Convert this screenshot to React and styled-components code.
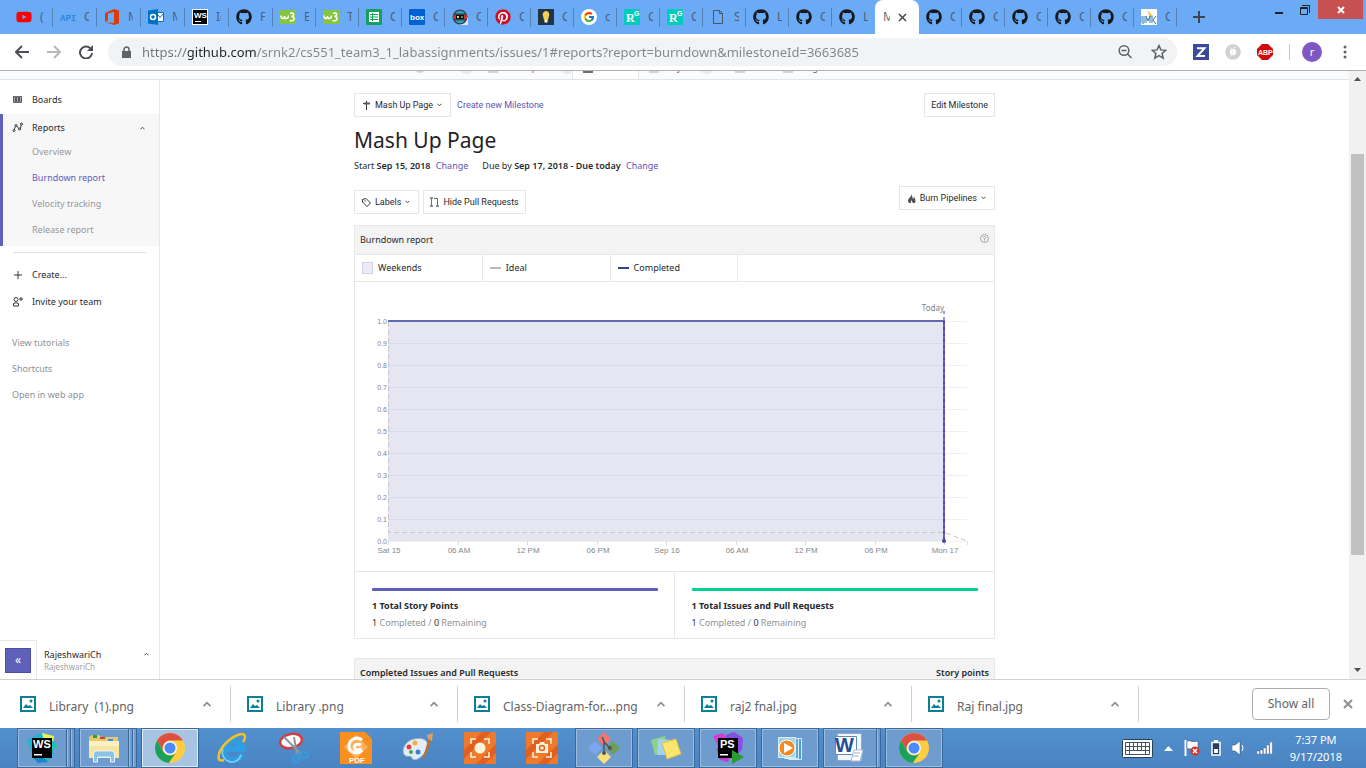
import React from "react";
import styled, { createGlobalStyle, css } from "styled-components";
import { FaGithub, FaPinterest, FaYoutube } from "react-icons/fa";
import { FcGoogle } from "react-icons/fc";

const ui = `"Noto Sans", "Open Sans", sans-serif`;
const compact = `Roboto, "Noto Sans", sans-serif`;
const arial = `"Liberation Sans", Arial, sans-serif`;
const line = "#e8e8e8";
const purple = "#5e60ba";

const Global = createGlobalStyle`
  *, *::before, *::after { box-sizing: border-box; }
  body { margin: 0; background: #fff; font-family: ${ui}; color: #26292c; }
  button { font-family: inherit; color: inherit; background: none; border: 0; padding: 0; margin: 0; cursor: pointer; }
  svg { display: block; flex: none; }
  ul, h1, h2, h3, p { margin: 0; padding: 0; font-weight: 400; }
  ul { list-style: none; }
`;

const Screen = styled.div`
  height: 100vh;
  display: flex;
  flex-direction: column;
  overflow: hidden;
`;

/* ---------- browser tabs ---------- */
const TabStrip = styled.div`
  display: flex;
  height: 34px;
  flex: none;
  background: #6babf6;
  padding-left: 9px;
`;
const Tab = styled.button`
  display: flex;
  align-items: center;
  gap: 8px;
  height: 34px;
  width: ${(p) => (p.$wide ? 44 : 43)}px;
  flex: none;
  padding-left: 7px;
  position: relative;
  &::after {
    content: "";
    position: absolute;
    right: 0;
    top: 8px;
    height: 19px;
    width: 1px;
    background: ${(p) => (p.$line ? "#5681b4" : "transparent")};
  }
`;
const TabText = styled.span`
  width: 5px;
  overflow: hidden;
  font-size: 12px;
  line-height: 18px;
  white-space: nowrap;
  text-align: left;
  color: #4d6079;
`;
const ActiveTab = styled.button`
  display: flex;
  align-items: center;
  gap: 8px;
  width: 44px;
  height: 34px;
  flex: none;
  padding-left: 8px;
  background: #fff;
  border-radius: 8px 8px 0 0;
`;
const ActiveText = styled(TabText)`
  width: 7px;
  color: #6f6f6f;
`;
const NewTab = styled.button`
  display: grid;
  place-items: center;
  width: 44px;
  height: 34px;
`;
const WindowButtons = styled.div`
  display: flex;
  align-items: flex-start;
  margin-left: auto;
  padding-right: 3px;
`;
const WinButton = styled.button`
  display: grid;
  place-items: center;
  width: ${(p) => (p.$close ? 45 : 26)}px;
  height: 19px;
  background: ${(p) => (p.$close ? "#c75050" : "transparent")};
`;

/* ---------- toolbar ---------- */
const Toolbar = styled.div`
  display: flex;
  align-items: center;
  height: 37px;
  flex: none;
  padding: 0 14px 0 12px;
  border-bottom: 1px solid #b5aeb2;
  background: #fff;
`;
const ToolButton = styled.button`
  display: grid;
  place-items: center;
  width: 20px;
  height: 28px;
  margin-right: 12px;
`;
const Omnibox = styled.div`
  display: flex;
  align-items: center;
  flex: 1;
  min-width: 0;
  height: 28px;
  padding: 0 10px 0 14px;
  border-radius: 14px;
  background: #f1f3f4;
`;
const Url = styled.input`
  flex: 1;
  min-width: 0;
  border: 0;
  outline: 0;
  padding: 0;
  margin-left: 11px;
  font: 13px/20px ${ui};
  color: transparent;
  background: linear-gradient(90deg, #72767a 46px, #1f2225 46px, #1f2225 115px, #80868b 115px);
  -webkit-background-clip: text;
  background-clip: text;
`;
const BoxButton = styled.button`
  margin-left: 18px;
`;
const Extensions = styled.div`
  display: flex;
  align-items: center;
  gap: 16px;
  padding-left: 16px;
`;
const Rule = styled.span`
  width: 1px;
  height: 16px;
  background: #c6c8ca;
`;
const Avatar = styled.button`
  width: 20px;
  height: 20px;
  margin-left: -4px;
  border-radius: 50%;
  background: #7e57c2;
  color: #fff;
  font-size: 11px;
  line-height: 18px;
`;

/* ---------- page ---------- */
const Viewport = styled.div`
  display: flex;
  flex: 1;
  min-height: 0;
`;
const Page = styled.div`
  flex: 1;
  min-width: 0;
  display: flex;
  flex-direction: column;
  overflow: hidden;
`;
const RepoNav = styled.nav`
  display: flex;
  justify-content: center;
  height: 9px;
  flex: none;
  overflow: hidden;
  background: #fafbfc;
  border-bottom: 1px solid #e1e4e8;
`;
const RepoNavInner = styled.div`
  display: flex;
  width: 641px;
  height: 9px;
  padding-left: 51px;
`;
const RepoLink = styled.a`
  display: flex;
  align-items: flex-end;
  gap: 4px;
  width: ${(p) => p.$w}px;
  height: 9px;
  padding: 0 10px 5px;
  flex: none;
  font-size: 9px;
  line-height: 12px;
  white-space: nowrap;
  text-decoration: none;
  color: #586069;
  & > span:nth-child(2) { padding-bottom: 1px; }
  ${(p) =>
    p.$on &&
    css`
      background: #fff;
      border: solid #e1e4e8;
      border-width: 0 1px;
      color: #24292e;
    `}
`;
const NavGlyph = styled.span`
  width: 10px;
  height: 10px;
  flex: none;
  margin-bottom: 2px;
  border-radius: ${(p) => (p.$round ? 5 : 0)}px;
  background: ${(p) => (p.$on ? "#6b7075" : "#d3d6d9")};
`;
const NavCount = styled.i`
  width: 12px;
  height: 10px;
  flex: none;
  margin-bottom: 1px;
  border-radius: 5px;
  background: #e9ebed;
`;
const Body = styled.div`
  display: flex;
  flex: 1;
  min-height: 0;
`;
const Sidebar = styled.aside`
  display: flex;
  flex-direction: column;
  width: 160px;
  flex: none;
  border-right: 1px solid ${line};
  padding-top: 6px;
`;
const SideItem = styled.a`
  display: flex;
  align-items: center;
  gap: 9px;
  height: 27px;
  padding: 0 14px 0 ${(p) => (p.$inset ? 9 : 12)}px;
  font-size: 9px;
  line-height: 12px;
  text-decoration: none;
  color: #26292c;
  & > svg:last-child:not(:first-child) { margin-left: auto; }
`;
const SideGroup = styled.div`
  border-left: 3px solid ${purple};
  background: #f7f7f7;
  margin-top: 1px;
  padding-bottom: 3px;
`;
const SideSub = styled.a`
  display: block;
  padding-left: 29px;
  font-size: 9px;
  line-height: 26px;
  height: 26px;
  text-decoration: none;
  color: ${(p) => (p.$on ? purple : "#96989b")};
`;
const SubList = styled.div`
  margin-top: -2px;
`;
const SideRule = styled.hr`
  width: 133px;
  height: 1px;
  margin: 6px 0 8px 13px;
  border: 0;
  background: #dfdfdf;
`;
const SideLinks = styled.div`
  margin-top: 15px;
`;
const SideLink = styled.a`
  display: block;
  padding-left: 12px;
  font-size: 9px;
  line-height: 26px;
  text-decoration: none;
  color: #8f9194;
`;
const UserBar = styled.div`
  display: flex;
  align-items: center;
  height: 39px;
  margin-top: auto;
`;
const CollapseCell = styled.div`
  width: 37px;
  height: 39px;
  padding: 6px 5px;
  border: solid ${line};
  border-width: 1px 1px 0 0;
`;
const Collapse = styled.button`
  width: 26px;
  height: 25px;
  border: 1px solid #4c4ea3;
  background: ${purple};
  color: #fff;
  font-size: 12px;
  line-height: 20px;
`;
const UserText = styled.div`
  flex: 1;
  padding: 2px 0 0 7px;
  font-size: 9px;
  line-height: 13px;
`;
const UserSub = styled.div`
  font-size: 8px;
  line-height: 12px;
  color: #9fa1a3;
`;
const UserToggle = styled.button`
  align-self: flex-start;
  margin: 12px 10px 0 0;
`;

const Main = styled.main`
  flex: 1;
  min-width: 0;
  padding: 13px 160px 0 0;
  overflow: hidden;
`;
const Column = styled.div`
  max-width: 641px;
  margin: 0 auto;
`;
const Bar = styled.div`
  display: flex;
  align-items: ${(p) => (p.$top ? "flex-start" : "center")};
  gap: 4px;
`;
const Outline = styled.button`
  display: flex;
  align-items: center;
  gap: 4px;
  height: 24px;
  padding: 0 ${(p) => (p.$plain ? 6 : 8)}px 0 ${(p) => (p.$plain ? 6 : 7)}px;
  border: 1px solid #e6e6e6;
  background: #fff;
  font: 9px/12px ${compact};
  white-space: nowrap;
  margin-left: ${(p) => (p.$end ? "auto" : 0)};
`;
const TextLink = styled.a`
  color: #5c54b4;
  font-size: 9px;
  line-height: 12px;
  text-decoration: none;
`;
const LeadLink = styled(TextLink)`
  padding-left: 2px;
  font-family: ${compact};
`;
const Title = styled.h1`
  margin-top: 7px;
  font-size: 21px;
  line-height: 32px;
  color: #1f2326;
`;
const Dates = styled.p`
  display: flex;
  gap: 14px;
  margin-top: 4px;
  font-size: 9px;
  line-height: 12px;
  b { font-weight: 600; }
  a { margin-left: 3px; }
`;
const Filters = styled(Bar)`
  margin: 14px 0 11px;
`;
const FilterSet = styled.div`
  display: flex;
  gap: 4px;
  padding-top: 4px;
`;
const Panel = styled.section`
  border: 1px solid ${line};
  background: #fff;
`;
const PanelHead = styled.header`
  display: flex;
  align-items: center;
  justify-content: space-between;
  height: 29px;
  padding: 0 5px;
  border-bottom: 1px solid ${line};
  background: #f3f3f3;
  font-size: 9px;
  line-height: 12px;
`;
const HeadTitle = styled.h2`
  font-size: 9px;
  line-height: 12px;
  font-weight: ${(p) => (p.$bold ? 600 : 400)};
`;
const HelpButton = styled.button`
  margin-bottom: 3px;
`;
const Legend = styled.div`
  display: grid;
  grid-template-columns: repeat(5, 1fr);
  height: 27px;
  border-bottom: 1px solid ${line};
`;
const LegendItem = styled.div`
  display: flex;
  align-items: center;
  gap: 5px;
  padding-left: 7px;
  border-right: 1px solid ${line};
  font-size: 9px;
  line-height: 12px;
`;
const Swatch = styled.span`
  width: 11px;
  height: 12px;
  border: 1px solid #d3d5e6;
  background: #e9ebf7;
`;
const Dash = styled.span`
  width: 11px;
  height: 2px;
  background: ${(p) => p.$c};
`;
const Chart = styled.svg`
  width: 100%;
  height: auto;
  font-family: ${arial};
`;
const Stats = styled.div`
  display: grid;
  grid-template-columns: 1fr 1fr;
  border-top: 1px solid ${line};
`;
const Stat = styled.div`
  padding: 16px 16px 9px 17px;
  &:first-child { border-right: 1px solid ${line}; }
`;
const Meter = styled.div`
  height: 3px;
  border-radius: 1px;
  background: ${(p) => p.$c};
`;
const StatTitle = styled.h3`
  margin-top: 8px;
  font-size: 9px;
  line-height: 14px;
  font-weight: 700;
`;
const StatText = styled.p`
  margin-top: 4px;
  font-size: 9px;
  line-height: 12px;
  color: #8f9194;
  span { color: #33363a; }
`;
const NextPanel = styled(Panel)`
  margin-top: 19px;
`;

const ScrollBar = styled.div`
  display: flex;
  flex-direction: column;
  align-items: center;
  width: 17px;
  flex: none;
  padding: 6px 2px;
  background: #f1f1f1;
`;
const ScrollTrack = styled.div`
  flex: 1;
  align-self: stretch;
  padding-top: 72px;
`;
const Thumb = styled.div`
  height: 78%;
  background: #c1c1c1;
`;

/* ---------- downloads ---------- */
const Shelf = styled.footer`
  display: flex;
  align-items: center;
  height: 49px;
  flex: none;
  border-top: 1px solid #d0d0d0;
  background: #fff;
`;
const Download = styled.button`
  display: flex;
  align-items: center;
  width: ${(p) => (p.$first ? 231 : 227)}px;
  height: 36px;
  flex: none;
  padding: 0 18px 0 ${(p) => (p.$first ? 20 : 16)}px;
  border-right: 1px solid #d0d0d0;
  color: #5f6368;
`;
const FileName = styled.span`
  flex: 1;
  padding: 5px 0 0 13px;
  text-align: left;
  font-size: 12px;
  line-height: 18px;
  white-space: pre;
`;
const ShowAll = styled.button`
  width: 78px;
  height: 32px;
  margin-left: auto;
  border: 1px solid #a9acb0;
  border-radius: 4px;
  font-size: 12px;
  line-height: 28px;
  color: #5f6368;
`;
const CloseShelf = styled.button`
  margin: 0 13px 0 13px;
`;

/* ---------- taskbar ---------- */
const Taskbar = styled.div`
  display: flex;
  align-items: center;
  height: 40px;
  flex: none;
  padding: 0 24px 0 17px;
  background: linear-gradient(#5390cd, #4a83c2);
`;
const Apps = styled.div`
  display: flex;
  gap: 4px;
`;
const App_ = styled.button`
  display: grid;
  place-items: center;
  width: 58px;
  height: 40px;
  position: relative;
  ${(p) =>
    p.$open &&
    css`
      border: 1px solid #3d6796;
      background: #6f9ccf;
      box-shadow: inset 0 0 0 1px #9cbde0;
    `}
  ${(p) =>
    p.$active &&
    css`
      background: #a8c4e3;
      box-shadow: inset 0 0 0 1px #dfeaf6;
    `}
  ${(p) =>
    p.$stack &&
    css`
      padding-right: ${p.$stack * 4}px;
      &::before {
        content: "";
        position: absolute;
        inset: 0 0 0 auto;
        width: ${p.$stack * 4}px;
        background: repeating-linear-gradient(90deg, #3d6796 0 1px, #9cbde0 1px 2px, #6f9ccf 2px 4px);
      }
    `}
`;
const Tray = styled.div`
  display: flex;
  align-items: center;
  gap: 11px;
  margin-left: auto;
`;
const Clock = styled.div`
  padding-left: 6px;
  text-align: center;
  font-size: 11px;
  line-height: 17px;
  color: #fff;
`;

/* ---------- icons ---------- */
const Svg = ({ w = 16, h, box, children, ...r }) => (
  <svg width={w} height={h || w} viewBox={box || `0 0 ${w} ${h || w}`} fill="none" aria-hidden="true" {...r}>
    {children}
  </svg>
);
const Chevron = ({ up, w = 5, c = "#45484c", s = 1 }) => (
  <Svg w={w} h={Math.ceil(w / 2) + 1} box="0 0 10 7">
    <path d={up ? "M1 6l4-4 4 4" : "M1 1l4 4 4-4"} stroke={c} strokeWidth={(s * 10) / w} />
  </Svg>
);
const Gh = () => <FaGithub size={16} color="#15191d" />;
const W3 = () => (
  <Svg>
    <path fill="#86c440" d="M0 1h16v14H0z" />
    <path d="M1 6.500c0 4 3.500 4 3.500.500 0 3.500 4 3.500 4-.500" stroke="#fff" strokeWidth="1.500" />
    <path d="M10 4.500c4-2 5 2.500 1.500 3 4 0 3.500 5.500-2 4" stroke="#fff" strokeWidth="1.500" />
  </Svg>
);
const Rg = () => (
  <Svg>
    <rect width="16" height="16" rx="1" fill="#00ccbb" />
    <text x="2" y="13" fontSize="12" fontFamily="Liberation Serif, serif" fontWeight="700" fill="#fff">R</text>
    <text x="10" y="7" fontSize="7" fontFamily="Liberation Sans, sans-serif" fontWeight="700" fill="#fff">G</text>
  </Svg>
);
const WsMark = () => (
  <Svg>
    <rect width="16" height="16" fill="#fff" />
    <rect x="1" y="1" width="14" height="14" fill="#000" />
    <text x="2" y="9" fontSize="8" fontFamily="Liberation Sans, sans-serif" fontWeight="700" fill="#fff">WS</text>
    <path fill="#fff" d="M3 12h6v1H3z" />
  </Svg>
);
const tabs = [
  ["(", <FaYoutube size={16} color="#f00" />],
  ["C", (
    <Svg><text x="0" y="12" fontSize="9" fontFamily="Liberation Mono, monospace" fontWeight="700" fill="#2c86dc">API</text></Svg>
  )],
  ["M", (
    <Svg><path fill="#dc3e0b" d="M1 4l9-4 5 1.500v13L10 16 1 13l9 1V3L4 4.500v7L1 13z" /></Svg>
  )],
  ["M", (
    <Svg>
      <path fill="#fff" stroke="#0072c6" d="M9 3.500h6.500v9H9z" /><path d="M10 6l2 2.500L15 5" stroke="#0072c6" />
      <path fill="#0072c6" d="M0 1.500L10 0v16L0 14.500z" /><circle cx="5" cy="8" r="2.500" stroke="#fff" strokeWidth="1.500" />
    </Svg>
  )],
  ["Ic", <WsMark />],
  ["F", <Gh />],
  ["E", <W3 />],
  ["T", <W3 />],
  ["C", (
    <Svg><rect width="16" height="16" rx="1" fill="#16a05d" /><path fill="#fff" d="M3 3h10v10H3z" /><path stroke="#16a05d" d="M4 5.500h8M4 8h8M4 10.500h8M6.500 4v8" /></Svg>
  )],
  ["C", (
    <Svg><rect width="16" height="16" rx="1" fill="#0061d5" /><text x="1" y="11" fontSize="8" fontFamily="Liberation Sans, sans-serif" fontWeight="700" fill="#fff">box</text></Svg>
  )],
  ["C", (
    <Svg><path fill="#dfe6ea" d="M8 8h8v8H8z" /><circle cx="8" cy="8" r="7.500" fill="#35434d" /><path fill="#32a3c4" d="M3 4.500a6 6 0 0110 0zM3 11.500a6 6 0 0010 0z" /><path fill="#c8332d" d="M1 6h3v4H1zM12 6h3v4h-3z" /><path fill="#111" d="M4 6h8v4H4z" /><path fill="#e4d24a" d="M5 7h2v2H5z" /><path fill="#3c9f5a" d="M9 7h2v2H9z" /></Svg>
  )],
  ["C", (
    <Svg><circle cx="8" cy="8" r="7.500" fill="#fff" /><FaPinterest size={16} color="#c8102b" /></Svg>
  )],
  ["C", (
    <Svg><path fill="#243340" d="M0 0h16v16H0z" /><path fill="#f7cf52" d="M8 2a3.500 3.500 0 00-3 5l1 4h4l1-4a3.500 3.500 0 00-3-5z" /><path fill="#fff" d="M6.500 11h3v2.500h-3z" /></Svg>
  )],
  ["c", (
    <Svg><circle cx="8" cy="8" r="8" fill="#fff" /><g transform="translate(2 2)"><FcGoogle size={12} /></g></Svg>
  )],
  ["C", <Rg />],
  ["C", <Rg />],
  ["S", (
    <Svg><path d="M3.500 1.500h6l3 3v10h-9zM9.500 1.500v3h3" stroke="#4b5560" /></Svg>
  )],
  ["L", <Gh />],
  ["C", <Gh />],
  ["L", <Gh />],
];
const umkc = (
  <Svg>
    <path fill="#fff" d="M0 0h16v16H0z" />
    <path fill="#f0bd31" d="M6 1l6 6-3 1z" />
    <path d="M1 7v6c0 2 2 2 2 0V7M5 14V7l2 5 2-5v7M11 7v7M15 7l-3 4 3 4" stroke="#2f74ad" />
  </Svg>
);
const lateTabs = [["C", <Gh />], ["C", <Gh />], ["C", <Gh />], ["C", <Gh />], ["C", <Gh />], ["C", umkc]];

const ChromeIcon = () => (
  <Svg w={32}>
    <circle cx="16" cy="16" r="15" fill="#ffcd40" />
    <path fill="#dd5144" d="M3 8.500A15 15 0 0129 8.500H16a7.500 7.500 0 00-7 5z" />
    <path fill="#dd5144" d="M3 8.500l6.500 11.250A7.500 7.500 0 0116 8.500z" />
    <path fill="#1aa15f" d="M3 8.500A15 15 0 0014.700 30.950L22.500 19.750a7.500 7.500 0 01-13 0z" />
    <circle cx="16" cy="16" r="7" fill="#f4f4f4" />
    <circle cx="16" cy="16" r="5.500" fill="#4c8bf5" />
  </Svg>
);
const WebStorm = () => (
  <Svg w={32}>
    <path fill="#1fb6d0" d="M1 8L14 1l10 2 5 8-3 15-8 5L8 28z" />
    <path fill="#e9ee5a" d="M16 1l12 3-1 9-9-3z" />
    <path fill="#17c7b4" d="M26 8l5 6-5 6z" />
    <path fill="#1c86c8" d="M6 24l12 2 4 4-10 1z" />
    <path fill="#000" d="M6 6h20v20H6z" />
    <text x="7" y="16" fontSize="11" fontWeight="700" fontFamily="Liberation Sans, sans-serif" fill="#fff">WS</text>
    <path fill="#fff" d="M8 22h8v1.500H8z" />
  </Svg>
);
const PhpStorm = () => (
  <Svg w={32}>
    <path fill="#d23fd0" d="M1 4l9-3 6 5-8 12z" />
    <path fill="#8b4be0" d="M14 3l8-3 9 6-1 12-8 8-8-10z" />
    <path fill="#c43bc9" d="M4 16l14 8-2 6-8-2z" />
    <path fill="#000" d="M6 6h20v20H6z" />
    <text x="8" y="16" fontSize="11" fontWeight="700" fontFamily="Liberation Sans, sans-serif" fill="#fff">PS</text>
    <path fill="#fff" d="M8 22h8v1.500H8z" />
    <path fill="#2a9b2f" d="M20 18l12 7-12 7z" />
  </Svg>
);
const Folder = () => (
  <Svg w={32}>
    <path fill="#e8c866" d="M1 5l3-2h7l2 2h17v21H1z" />
    <path fill="#2f9d4c" d="M5 3h4v3H5z" /><path fill="#d23f31" d="M12 5h5v2h-5z" /><path fill="#3a8fd8" d="M20 7h5v2h-5z" />
    <path fill="#f7e6a1" d="M1 9h30v17H1z" /><path fill="#fbf1c4" d="M1 9h30v5H1z" />
    <path fill="#8ac3ea" stroke="#e6f3fc" d="M5.500 30V22q0-3 3-3h15q3 0 3 3v8h-4v-5h-13v5z" />
  </Svg>
);
const IE = () => (
  <Svg w={32}>
    <path d="M26 22A9.500 9.500 0 1126.500 17H9" stroke="#2f9fe4" strokeWidth="5.500" />
    <path d="M25 23A9.500 9.500 0 117 17" stroke="#7fd0f7" strokeWidth="1.500" />
    <path d="M8 28C-1 31 2 19 10 11 18 3 29-1 29 5c0 2-1 4-2 5" stroke="#f2c02c" strokeWidth="2.500" />
  </Svg>
);
const Snip = () => (
  <Svg w={32}>
    <ellipse cx="13" cy="9" rx="11" ry="7" fill="#fff" stroke="#cf3f45" strokeWidth="2.500" transform="rotate(-12 13 9)" />
    <path d="M6 5l17 17M16 5l3 18" stroke="#8d949c" strokeWidth="2" />
    <ellipse cx="26" cy="23" rx="4" ry="3" stroke="#3a9ad9" strokeWidth="2.500" /><ellipse cx="18" cy="27" rx="3" ry="4" stroke="#3a9ad9" strokeWidth="2.500" />
  </Svg>
);
const Foxit = () => (
  <Svg w={32}>
    <path fill="#f7901e" d="M0 0h25l7 7v25H0z" /><path fill="#5390cd" d="M25 0h7v7z" /><path fill="#f7901e" d="M26 1v5h5z" />
    <path fill="#fbb25d" d="M16 3l12 12-12 12L4 15z" />
    <path d="M22 8c-5-4-13-1-13 6s9 9 13 4M21 13c-4-2-8 0-6 4 2 2 5 1 6-1" stroke="#fff" strokeWidth="3" />
    <text x="9" y="31" fontSize="8" fontWeight="700" fontFamily="Liberation Sans, sans-serif" fill="#fff">PDF</text>
  </Svg>
);
const Paint = () => (
  <Svg w={32}>
    <path fill="#e4edf4" stroke="#9bb3c8" d="M12 7c14-3 16 6 11 13-4 7-12 10-13 6-1-3-4-1-6-2-6-3-2-15 8-17z" />
    <circle cx="7" cy="15" r="2.500" fill="#d9453c" /><circle cx="13" cy="11" r="2.500" fill="#f2b13a" /><circle cx="9" cy="20" r="2" fill="#48a447" /><circle cx="16" cy="20" r="2.500" fill="#3d7fd0" />
    <path d="M27 5l-5 17-2 7 4-6 6-17z" fill="#b87333" /><path d="M25 3l6-2-1 8-4-2z" fill="#d9a066" />
  </Svg>
);
const Capture = ({ camera }) => (
  <Svg w={32}>
    <path fill="#ee7a2d" d="M0 0h32v32H0z" /><path fill="#e35f20" d="M0 18L18 0h9L0 27zM12 32L32 12v9L21 32z" />
    <path d="M7 12V7h5M20 7h5v5M25 20v5h-5M12 25H7v-5" stroke="#fdf3da" strokeWidth="1.500" />
    {camera ? (
      <g><path fill="#fdf3da" d="M10 12h3l1-2h4l1 2h3v9H10z" /><circle cx="16" cy="16" r="2.500" stroke="#e35f20" strokeWidth="1.500" /></g>
    ) : (
      <circle cx="16" cy="16" r="5.500" fill="#fdf3da" />
    )}
  </Svg>
);
const Git = () => (
  <Svg w={32}>
    <path fill="#f3766a" d="M16 0l7 7-7 7-7-7z" /><path fill="#7ba7f0" d="M7 9l7 7-7 7-7-7z" />
    <path fill="#6f9e57" d="M25 9l7 7-7 7-7-7z" /><path fill="#fae07c" d="M16 18l7 7-7 7-7-7z" />
    <path d="M14 5l2 4v13M16 10l6 6" stroke="#4a5560" strokeWidth="1.500" /><circle cx="16" cy="21" r="2" fill="#4a5560" /><circle cx="22" cy="16" r="2" fill="#4a5560" />
  </Svg>
);
const Sticky = () => (
  <Svg w={32}>
    <path fill="#8fd08a" d="M1 8l14-4 3 14-13 5z" /><path fill="#9fd3f0" d="M8 7l14 1-2 15H7z" />
    <path fill="#fbe56f" stroke="#dcbf3d" d="M12 11l14-4 5 15-14 5z" />
  </Svg>
);
const Media = () => (
  <Svg w={32}>
    <path fill="#4d9fd0" stroke="#d6ecf8" d="M14.500 6.500h13v21h-13z" /><path fill="#5fabd8" stroke="#d6ecf8" d="M10.500 6.500h14v20h-14z" /><path fill="#a3d2ec" stroke="#d6ecf8" d="M4.500 5.500h17v20h-17z" />
    <circle cx="13" cy="16" r="8" fill="#f28a20" stroke="#fff" /><path fill="#fff" d="M10 11l9 5-9 5z" />
  </Svg>
);
const Word = () => (
  <Svg w={32}>
    <path fill="#f2f6fb" stroke="#8fa9cc" d="M3.500 1.500h24v27h-24z" /><path fill="#fff" stroke="#5f87c0" d="M1.500 4.500h21v18h-21z" />
    <text x="1" y="20" fontSize="20" fontWeight="700" fontFamily="Liberation Sans, sans-serif" fill="#1e4f98">W</text>
    <path fill="#fff" stroke="#a9bcd6" d="M20 18h9l-3 11h-9z" /><path d="M20 21h6M19 24h6" stroke="#9db2d0" />
  </Svg>
);

const apps = [
  ["WebStorm", <WebStorm />, 1, 2],
  ["File Explorer", <Folder />, 1, 2],
  ["Chrome", <ChromeIcon />, 1, 0, 1],
  ["Internet Explorer", <IE />],
  ["Snipping Tool", <Snip />],
  ["Foxit PDF", <Foxit />],
  ["Paint", <Paint />],
  ["Screen recorder", <Capture />],
  ["Screen capture", <Capture camera />],
  ["Git", <Git />, 1],
  ["Sticky Notes", <Sticky />, 1],
  ["PhpStorm", <PhpStorm />, 1],
  ["Media Player", <Media />, 1],
  ["Word", <Word />, 1, 1],
  ["Chrome", <ChromeIcon />, 1],
];

/* ---------- burndown chart ---------- */
const X0 = 33, XT = 589, XE = 612, Y1 = 39, Y0 = 259;
const xLabels = ["Sat 15", "06 AM", "12 PM", "06 PM", "Sep 16", "06 AM", "12 PM", "06 PM", "Mon 17"];
function Burndown() {
  const rows = Array.from({ length: 11 }, (_, i) => i);
  const step = (XT - X0) / 8;
  const idealY = Y0 - 8.5;
  return (
    <Chart viewBox="0 0 639 289" role="img" aria-label="Burndown report">
      <rect x={X0} y={Y1} width={XT - X0} height={Y0 - Y1} fill="#e6e6f3" />
      {rows.map((i) => {
        const y = Y1 + (i * (Y0 - Y1)) / 10;
        return (
          <g key={i}>
            <rect x={X0} y={y} width={XE - X0} height="1" fill="#6c6c80" fillOpacity="0.1" />
            <text x={X0 - 1} y={y + 3} fontSize="7" textAnchor="end" fill="#80858c">{(1 - i / 10).toFixed(1)}</text>
          </g>
        );
      })}
      {xLabels.map((t, i) => {
        const x = Math.round(X0 + i * step);
        return (
          <g key={i}>
            <rect x={x} y={Y0} width="1" height="4" fill="#dedede" />
            <text x={x + 1} y={Y0 + 12} fontSize="8" textAnchor="middle" fill="#85888b">{t}</text>
          </g>
        );
      })}
      <rect x={XE} y={Y0} width="1" height="4" fill="#dedede" />
      <path d={`M${X0 + 0.5} ${Y1 + 1}V${idealY}H${XT}L${XE} ${Y0}`} fill="none" stroke="#c6c6c6" strokeDasharray="5 3" />
      <path d={`M${X0} ${Y1}H${XT}V${Y0}`} fill="none" stroke="#6468b0" strokeWidth="2" />
      <path d={`M${XT} ${Y1 - 10}V${Y1}`} stroke="#a48cf0" strokeWidth="2" strokeDasharray="3 3" fill="none" />
      <path d={`M${XT} ${Y1}V${Y0}`} stroke="#5a3fd6" strokeWidth="2" strokeDasharray="3 3" fill="none" />
      <circle cx={XT} cy={Y0} r="2" fill="#3f4a9b" />
      <text x={XT} y={Y1 - 10} fontSize="8" textAnchor="end" fill="#7d8084" fontFamily={ui}>Today</text>
    </Chart>
  );
}

const TabSet = ({ items, from = 0 }) =>
  items.map(([t, icon], i) => (
    <Tab key={i} $wide={from === 0 && i < 6} $line={from > 0 || i < items.length - 1} aria-label="Tab">
      {icon}
      <TabText>{t}</TabText>
    </Tab>
  ));

export default function App() {
  return (
    <Screen>
      <Global />
      <TabStrip>
        <TabSet items={tabs} />
        <ActiveTab aria-label="Current tab">
          <ActiveText>M</ActiveText>
          <Svg w={9}><path d="M1 1l7 7M8 1L1 8" stroke="#45484c" strokeWidth="1.500" /></Svg>
        </ActiveTab>
        <TabSet items={lateTabs} from={1} />
        <NewTab aria-label="New tab">
          <Svg w={12}><path d="M6 0v12M0 6h12" stroke="#3d4650" strokeWidth="2" /></Svg>
        </NewTab>
        <WindowButtons>
          <WinButton aria-label="Minimize"><Svg w={8} h={12}><path d="M0 9h8" stroke="#222" strokeWidth="2" /></Svg></WinButton>
          <WinButton aria-label="Restore"><Svg w={10}><path d="M.5 2.500h7v7h-7zM2 .5h7.500V8" stroke="#222" /><path d="M1 3.500h6" stroke="#222" /></Svg></WinButton>
          <WinButton $close aria-label="Close"><Svg w={8}><path d="M1 1l6 6M7 1L1 7" stroke="#fff" strokeWidth="2" /></Svg></WinButton>
        </WindowButtons>
      </TabStrip>

      <Toolbar>
        <ToolButton aria-label="Back"><Svg w={14}><path d="M14 7H1M7 1L1 7l6 6" stroke="#4c5055" strokeWidth="2" /></Svg></ToolButton>
        <ToolButton aria-label="Forward"><Svg w={14}><path d="M0 7h13M7 1l6 6-6 6" stroke="#b6b8bb" strokeWidth="2" /></Svg></ToolButton>
        <ToolButton aria-label="Reload"><Svg w={14}><path d="M12 4.200A6 6 0 1013 8" stroke="#4c5055" strokeWidth="2" /><path d="M14 0v6H8z" fill="#4c5055" /></Svg></ToolButton>
        <Omnibox>
          <Svg w={9} h={12}><path fill="#5f6368" d="M0 5h9v7H0z" /><path d="M2 5V3.500a2.500 2.500 0 015 0V5" stroke="#5f6368" strokeWidth="1.500" /></Svg>
          <Url
            aria-label="Address"
            defaultValue="https://github.com/srnk2/cs551_team3_1_labassignments/issues/1#reports?report=burndown&milestoneId=3663685"
          />
          <BoxButton aria-label="Zoom"><Svg w={16}><circle cx="7" cy="6.500" r="4.800" stroke="#5f6368" strokeWidth="1.500" /><path d="M4.500 6.500h5M10.500 10l4 4" stroke="#5f6368" strokeWidth="1.500" /></Svg></BoxButton>
          <BoxButton aria-label="Bookmark"><Svg w={16}><path d="M8 1.500l1.900 4.400 4.800.4-3.600 3.200 1.100 4.700L8 11.700l-4.200 2.500 1.100-4.700L1.300 6.300l4.800-.4z" stroke="#5f6368" strokeWidth="1.500" /></Svg></BoxButton>
        </Omnibox>
        <Extensions>
          <button aria-label="ZenHub"><Svg><path fill="#3c4a9c" d="M0 0h16v16H0z" /><path d="M4 4.200h7.500L4.500 12H12" stroke="#fff" strokeWidth="2" /></Svg></button>
          <button aria-label="Extension"><Svg><circle cx="8" cy="8" r="5.500" stroke="#d0d0d0" strokeWidth="4.500" /><path d="M5 3q5 5 0 10M11 3q-3 1-3 3" stroke="#f0f0f0" strokeWidth="1" /></Svg></button>
          <button aria-label="Adblock Plus"><Svg><path fill="#d00a0a" d="M5 0h6l5 5v6l-5 5H5l-5-5V5z" /><text x="1" y="11" fontSize="7" fontWeight="700" fontFamily="Liberation Sans, sans-serif" fill="#fff">ABP</text></Svg></button>
          <Rule />
          <Avatar>r</Avatar>
          <button aria-label="Menu"><Svg w={14}><g fill="#5f6368"><circle cx="7" cy="2" r="1.500" /><circle cx="7" cy="7" r="1.500" /><circle cx="7" cy="12" r="1.500" /></g></Svg></button>
        </Extensions>
      </Toolbar>

      <Viewport>
        <Page>
          <RepoNav>
            <RepoNavInner>
              <RepoLink href="#issues" $w={73}><NavGlyph $round /><span>Issues</span><NavCount /></RepoLink>
              <RepoLink href="#pulls" $w={94}><NavGlyph /><span>Pull requests</span><NavCount /></RepoLink>
              <RepoLink href="#zenhub" $w={67} $on><NavGlyph $on /></RepoLink>
              <RepoLink href="#projects" $w={86}><NavGlyph /><span>Projects</span><NavCount /></RepoLink>
              <RepoLink href="#wiki" $w={48}><NavGlyph /><span>Wiki</span></RepoLink>
              <RepoLink href="#insights" $w={70}><NavGlyph /><span>Insights</span></RepoLink>
            </RepoNavInner>
          </RepoNav>
          <Body>
            <Sidebar>
              <SideItem href="#boards">
                <Svg w={11}><path d="M1.500 2.500h2v6h-2zM4.500 2.500h2v6h-2zM7.500 2.500h2v6h-2z" stroke="#55585c" fill="#a8aaad" /></Svg>
                Boards
              </SideItem>
              <SideGroup>
                <SideItem href="#reports" $inset>
                  <Svg w={11}><path d="M2 8l2-5 4 5 1.500-6" stroke="#33363a" /><g fill="#fff" stroke="#33363a"><circle cx="2" cy="8.500" r="1" /><circle cx="4" cy="3.500" r="1" /><circle cx="7.500" cy="7" r="1" /><circle cx="9.500" cy="2" r="1" /></g></Svg>
                  Reports
                  <Chevron up />
                </SideItem>
                <SubList>
                  <SideSub href="#overview">Overview</SideSub>
                  <SideSub href="#burndown" $on>Burndown report</SideSub>
                  <SideSub href="#velocity">Velocity tracking</SideSub>
                  <SideSub href="#release">Release report</SideSub>
                </SubList>
              </SideGroup>
              <SideRule />
              <SideItem href="#create"><Svg w={11}><path d="M6 2v8M2 6h8" stroke="#33363a" /></Svg>Create...</SideItem>
              <SideItem href="#invite"><Svg w={11}><circle cx="4" cy="3.500" r="2" stroke="#33363a" /><path d="M1.500 10V7.500q2.500-1.500 5 0V10zM9 1v4M7 3h4" stroke="#33363a" /></Svg>Invite your team</SideItem>
              <SideLinks>
                <SideLink href="#tutorials">View tutorials</SideLink>
                <SideLink href="#shortcuts">Shortcuts</SideLink>
                <SideLink href="#web">Open in web app</SideLink>
              </SideLinks>
              <UserBar>
                <CollapseCell><Collapse aria-label="Collapse sidebar">«</Collapse></CollapseCell>
                <UserText>RajeshwariCh<UserSub>RajeshwariCh</UserSub></UserText>
                <UserToggle aria-label="Account"><Chevron up /></UserToggle>
              </UserBar>
            </Sidebar>
            <Main>
              <Column>
                <Bar>
                  <Outline>
                    <Svg w={9}><path d="M4.500 0v9M1 2.500h7" stroke="#33363a" /><path d="M2 1.500h6v2H2z" fill="#55585c" /></Svg>
                    Mash Up Page <Chevron />
                  </Outline>
                  <LeadLink href="#new">Create new Milestone</LeadLink>
                  <Outline $end $plain>Edit Milestone</Outline>
                </Bar>
                <Title>Mash Up Page</Title>
                <Dates>
                  <span>Start <b>Sep 15, 2018</b> <TextLink href="#start">Change</TextLink></span>
                  <span>Due by <b>Sep 17, 2018 - Due today</b> <TextLink href="#due">Change</TextLink></span>
                </Dates>
                <Filters $top>
                  <FilterSet>
                    <Outline>
                      <Svg w={9}><path d="M.5 1.500l3.500-1 4.500 4.500-3.500 3.500-4.500-4.500z" stroke="#33363a" /><circle cx="3" cy="3" r=".7" fill="#33363a" /></Svg>
                      Labels <Chevron />
                    </Outline>
                    <Outline $plain>
                      <Svg w={9} h={10}><path d="M1.500 2v7M4 1.500h3.500V9" stroke="#6b7078" /><path fill="#8a8e94" d="M0 0h3v2H0zM0 8h3v2H0zM6 8h3v2H6z" /></Svg>
                      Hide Pull Requests
                    </Outline>
                  </FilterSet>
                  <Outline $end>
                    <Svg w={9}><path fill="#4d535b" d="M4.500 0c0 3-3.500 4-3.500 7l1 2h2V6l2 3h2c1-3 0-5-1-6l-1 2z" /></Svg>
                    Burn Pipelines <Chevron />
                  </Outline>
                </Filters>
                <Panel>
                  <PanelHead>
                    <HeadTitle>Burndown report</HeadTitle>
                    <HelpButton aria-label="Help"><Svg w={9}><circle cx="4.500" cy="4.500" r="4" stroke="#a3a5a8" /><path d="M3 3.500q1.500-2 3 0L4.500 5v1M4.500 6.500v1" stroke="#a3a5a8" /></Svg></HelpButton>
                  </PanelHead>
                  <Legend>
                    <LegendItem><Swatch />Weekends</LegendItem>
                    <LegendItem><Dash $c="#b9b9b9" />Ideal</LegendItem>
                    <LegendItem><Dash $c="#36418f" />Completed</LegendItem>
                  </Legend>
                  <Burndown />
                  <Stats>
                    <Stat>
                      <Meter $c={purple} />
                      <StatTitle>1 Total Story Points</StatTitle>
                      <StatText><span>1</span> Completed / <span>0</span> Remaining</StatText>
                    </Stat>
                    <Stat>
                      <Meter $c="#00d092" />
                      <StatTitle>1 Total Issues and Pull Requests</StatTitle>
                      <StatText><span>1</span> Completed / <span>0</span> Remaining</StatText>
                    </Stat>
                  </Stats>
                </Panel>
                <NextPanel>
                  <PanelHead>
                    <HeadTitle $bold>Completed Issues and Pull Requests</HeadTitle>
                    <HeadTitle $bold>Story points</HeadTitle>
                  </PanelHead>
                </NextPanel>
              </Column>
            </Main>
          </Body>
        </Page>
        <ScrollBar>
          <Svg w={7} h={5}><path fill="#505050" d="M3.500 0L7 4H0z" /></Svg>
          <ScrollTrack><Thumb /></ScrollTrack>
          <Svg w={7} h={5}><path fill="#505050" d="M0 0h7L3.500 4z" /></Svg>
        </ScrollBar>
      </Viewport>

      <Shelf>
        {["Library  (1).png", "Library .png", "Class-Diagram-for....png", "raj2 fnal.jpg", "Raj final.jpg"].map((n, i) => (
          <Download key={n} $first={i === 0}>
            <Svg w={16}><path d="M1 1h14v14H1z" fill="#fff" stroke="#0b8094" strokeWidth="2" /><path fill="#0b8094" d="M3 12l3-4 2 2 2-1 3 3z" /><circle cx="11" cy="5" r="1.500" fill="#0b8094" /></Svg>
            <FileName>{n}</FileName>
            <Chevron up w={10} c="#8b8e92" s={2} />
          </Download>
        ))}
        <ShowAll>Show all</ShowAll>
        <CloseShelf aria-label="Close downloads"><Svg w={10}><path d="M1 1l8 8M9 1L1 9" stroke="#8b8e92" strokeWidth="2" /></Svg></CloseShelf>
      </Shelf>

      <Taskbar>
        <Apps>
          {apps.map(([n, icon, open, stack, active], i) => (
            <App_ key={i} aria-label={n} $open={open} $stack={stack} $active={active}>{icon}</App_>
          ))}
        </Apps>
        <Tray>
          <Svg w={31} h={19}>
            <rect x=".5" y=".5" width="30" height="18" rx="1" fill="#fff" stroke="#28405c" />
            <path d="M3.500 3.500h24v12h-24zM3.500 7.500h24M3.500 11.500h24M7.500 3.500v12M11.500 3.500v8M15.500 3.500v8M19.500 3.500v8M23.500 3.500v12" stroke="#3c536e" />
          </Svg>
          <Svg w={9} h={5}><path fill="#fff" d="M4.500 0L9 5H0z" /></Svg>
          <Svg w={16}><path d="M1.500 0v16" stroke="#fff" strokeWidth="2" /><path fill="#fff" stroke="#28405c" strokeWidth=".5" d="M3 1c4-1 5 2 11 0v8c-5 2-7-1-11 0z" /><circle cx="11" cy="11" r="4.500" fill="#d9342b" /><path d="M9 9l4 4M13 9l-4 4" stroke="#fff" strokeWidth="1.500" /></Svg>
          <Svg w={10} h={16}><path fill="#28405c" stroke="#fff" strokeWidth="1.500" d="M1 2.500h8V15H1z" /><path fill="#fff" d="M3 0h4v2H3zM3 9h4v4H3z" /></Svg>
          <Svg w={14} h={16}><path fill="#fff" stroke="#28405c" strokeWidth=".5" d="M0 5h3l5-4v14l-5-4H0z" /><path d="M10 5q2 3 0 6" stroke="#fff" /></Svg>
          <Svg w={16} h={12}><path fill="#fff" stroke="#28405c" strokeWidth=".3" d="M0 9h2.500v3H0zM3.200 8h2.500v4H3.200zM6.400 6h2.500v6H6.400zM9.600 3h2.500v9H9.600zM12.800 0h2.500v12h-2.500z" /></Svg>
          <Clock>7:37 PM<br />9/17/2018</Clock>
        </Tray>
      </Taskbar>
    </Screen>
  );
}
